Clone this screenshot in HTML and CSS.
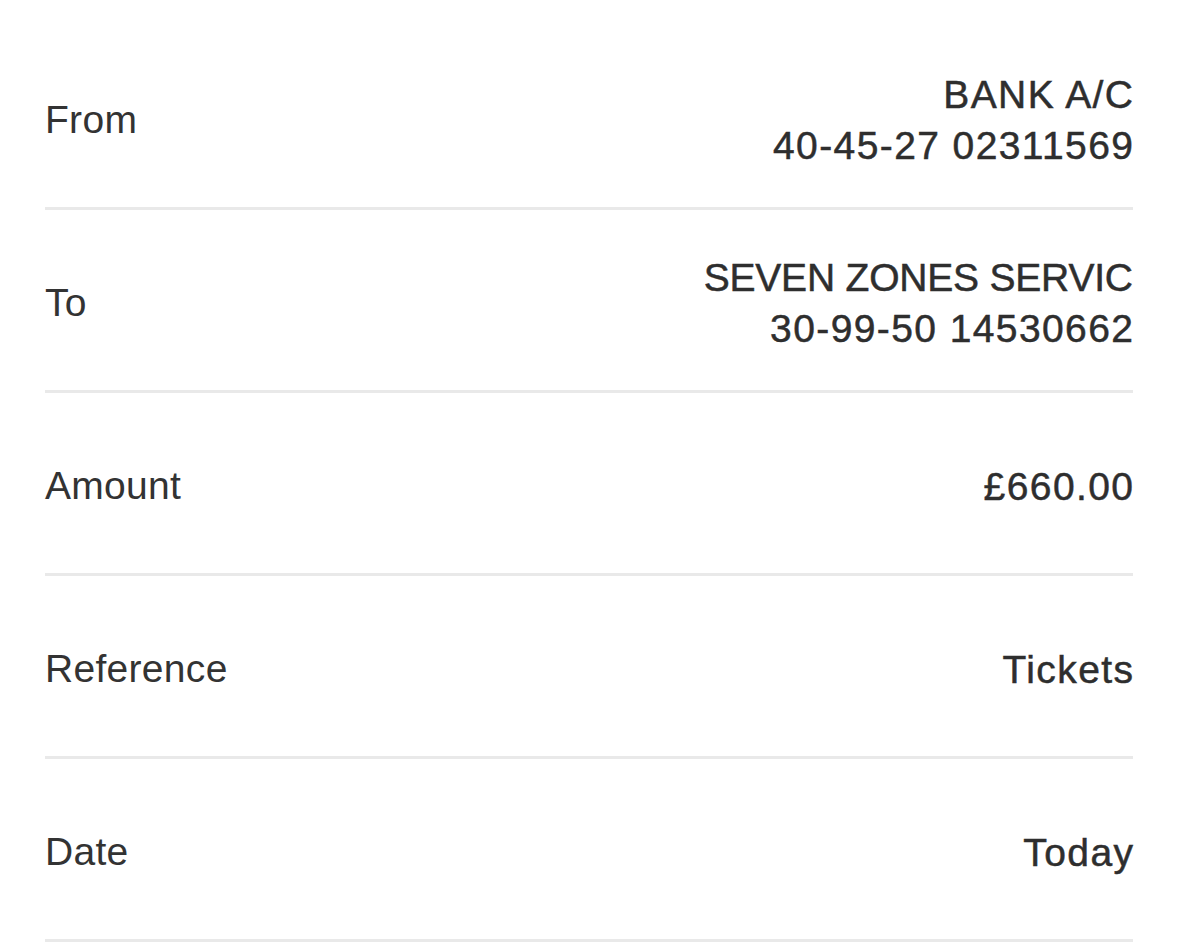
FILE: index.html
```html
<!DOCTYPE html>
<html lang="en">
<head>
<meta charset="utf-8">
<title>Payment details</title>
<link rel="stylesheet" href="styles.css">
</head>
<body>
<main class="details">
  <div class="row">
    <span class="label">From</span>
    <span class="value"><span class="line">BANK A/C</span><span class="line">40-45-27 02311569</span></span>
  </div>
  <div class="row">
    <span class="label">To</span>
    <span class="value"><span class="line caps">SEVEN ZONES SERVIC</span><span class="line">30-99-50 14530662</span></span>
  </div>
  <div class="row">
    <span class="label">Amount</span>
    <span class="value">£660.00</span>
  </div>
  <div class="row">
    <span class="label">Reference</span>
    <span class="value">Tickets</span>
  </div>
  <div class="row">
    <span class="label">Date</span>
    <span class="value">Today</span>
  </div>
</main>
</body>
</html>
```
FILE: styles.css
```css
html, body {
  margin: 0;
  padding: 0;
  background: #ffffff;
}
body {
  font-family: "Liberation Sans", Arial, sans-serif;
  color: #333333;
}
.details {
  padding: 27px 46px 0 45px;
}
.row {
  height: 174px;
  padding-top: 6px;
  display: flex;
  align-items: center;
  justify-content: space-between;
  border-bottom: 3px solid #e9e9e9;
}
.label {
  font-size: 39px;
  line-height: 50px;
  letter-spacing: 0.3px;
  color: #333333;
}
.value {
  display: flex;
  flex-direction: column;
  align-items: flex-end;
  font-size: 39px;
  line-height: 51px;
  letter-spacing: 1.4px;
  margin-right: -1.4px;
  color: #2e2e2e;
  -webkit-text-stroke: 0.5px #2e2e2e;
  text-align: right;
}
.caps {
  letter-spacing: -0.2px;
  margin-right: 1.6px;
}
```
